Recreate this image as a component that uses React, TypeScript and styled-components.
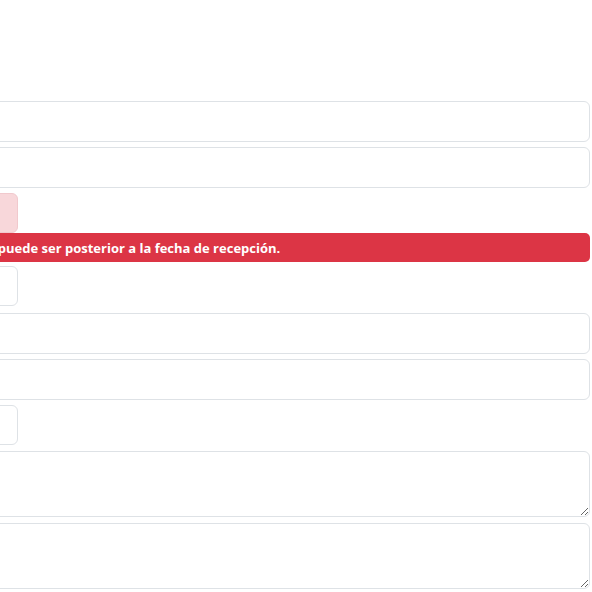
import styled, { createGlobalStyle } from "styled-components";

// the form is scrolled sideways: only its right part is in view
const OFFSET = 300;

const GlobalStyle = createGlobalStyle`
  html, body {
    margin: 0;
    padding: 0;
    background: #ffffff;
    overflow: hidden;
  }
  body {
    font-family: "Open Sans", "Liberation Sans", sans-serif;
    color: #212529;
  }
`;

const Page = styled("div")`
  width: 592px;
  height: 592px;
  overflow: hidden;
`;

const Form = styled("form")`
  display: flex;
  flex-direction: column;
  align-items: flex-start;
  margin-left: -${OFFSET}px;
  width: ${OFFSET + 590}px;
  padding-top: 101px;
`;

const TextInput = styled("input")`
  box-sizing: border-box;
  width: 100%;
  height: 41px;
  margin: 0 0 5px;
  padding: 6px 12px;
  font: inherit;
  font-size: 16px;
  border: 1px solid #dee2e6;
  border-radius: 6px;
  background: #ffffff;
  outline: none;
`;

const DateBox = styled("div")<{ $invalid?: boolean; $gap?: number }>`
  box-sizing: border-box;
  width: ${OFFSET + 18}px;
  height: 40px;
  margin-bottom: ${(p) => p.$gap ?? 6}px;
  padding-right: 17px;
  font-size: 16px;
  line-height: 38px;
  text-align: right;
  color: #212529;
  white-space: nowrap;
  border: 1px solid ${(p) => (p.$invalid ? "#f1c9cd" : "#dee2e6")};
  border-radius: 6px;
  background: ${(p) => (p.$invalid ? "#f8d7da" : "#ffffff")};
`;

const Alert = styled("div")`
  box-sizing: border-box;
  width: 100%;
  height: 29px;
  margin-bottom: 4px;
  display: flex;
  align-items: center;
  padding-left: ${OFFSET - 154}px;
  background: #dc3545;
  border-radius: 5px;
  color: #ffffff;
  font-size: 13px;
  font-weight: 700;
  white-space: nowrap;
`;

const TextArea = styled("textarea")`
  box-sizing: border-box;
  width: 100%;
  height: 66px;
  margin: 0 0 6px;
  padding: 6px 12px;
  font: inherit;
  font-size: 16px;
  border: 1px solid #dee2e6;
  border-radius: 6px;
  background: #ffffff;
  outline: none;
  display: block;
`;

export default function App() {
  return (
    <Page>
      <GlobalStyle />
      <Form onSubmit={(e) => e.preventDefault()}>
        <TextInput type="text" />
        <TextInput type="text" />
        <DateBox $invalid $gap={0}>Fecha de emisión</DateBox>
        <Alert>La fecha de emisión no puede ser posterior a la fecha de recepción.</Alert>
        <DateBox $gap={7}>Fecha de recepción</DateBox>
        <TextInput type="text" />
        <TextInput type="text" />
        <DateBox>Fecha de aprobación</DateBox>
        <TextArea />
        <TextArea />
      </Form>
    </Page>
  );
}
